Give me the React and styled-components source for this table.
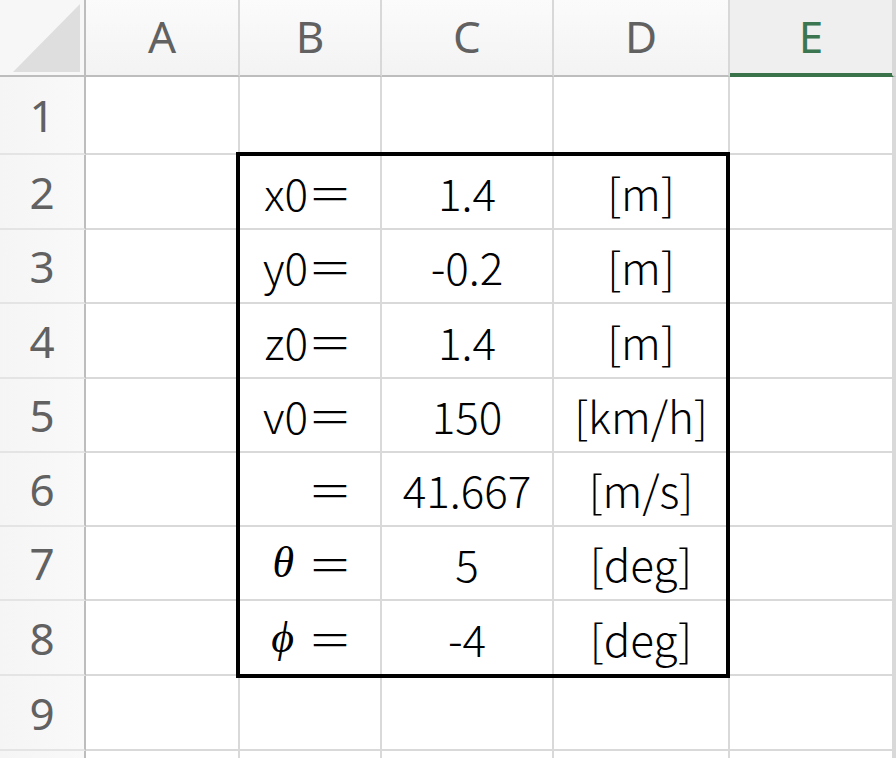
import React from 'react';
import styled, { createGlobalStyle, css } from 'styled-components';

const GlobalStyle = createGlobalStyle`
  html, body { margin: 0; padding: 0; background: #fff; overflow: hidden; }
  body { width: 896px; height: 758px; }
`;

const COL_WIDTHS = [86, 154, 142, 172, 176, 164];
const ROW_HEIGHTS = [77, 78, 75, 74, 75, 74, 74, 74, 75, 75, 40];

const Sheet = styled.div`
  display: grid;
  grid-template-columns: ${COL_WIDTHS.map((w) => `${w}px`).join(' ')} 1fr;
  grid-template-rows: ${ROW_HEIGHTS.map((h) => `${h}px`).join(' ')};
  width: 896px;
  height: 758px;
  overflow: hidden;
  background: #fff;
`;

const placed = css`
  grid-row: ${(p) => p.$row};
  grid-column: ${(p) => p.$col};
  box-sizing: border-box;
  min-width: 0;
  overflow: hidden;
`;

const Corner = styled.div`
  ${placed}
  background: #f7f7f7;
  border-right: 2px solid #bdbdbd;
  border-bottom: 2px solid #bdbdbd;
  padding: 4px 4px 3px 13px;
  display: flex;
`;

const CornerTriangle = styled.div`
  flex: 1;
  background: #dedede;
  clip-path: polygon(100% 0, 100% 100%, 0 100%);
`;

const ColHeader = styled.div`
  ${placed}
  display: flex;
  align-items: center;
  justify-content: center;
  background: ${(p) => (p.$active ? '#efefef' : 'linear-gradient(#fbfbfb, #f3f3f3)')};
  border-right: 2px solid #d8d8d8;
  border-bottom: 2px solid ${(p) => (p.$active ? '#3a7349' : '#bdbdbd')};
  box-shadow: ${(p) => (p.$active ? 'inset 0 -2px 0 #3a7349' : 'none')};
  color: ${(p) => (p.$active ? '#3b7650' : '#616161')};
  font-family: "Noto Sans", "Open Sans", sans-serif;
  font-size: 44px;
  line-height: 1;
  padding-bottom: 4px;
`;

const RowHeader = styled.div`
  ${placed}
  display: flex;
  align-items: center;
  justify-content: center;
  background: linear-gradient(90deg, #f5f5f5, #f9f9f9);
  border-right: 2px solid #bdbdbd;
  border-bottom: 2px solid #e4e4e4;
  color: #616161;
  font-family: "Noto Sans", "Open Sans", sans-serif;
  font-size: 44px;
  line-height: 1;
`;

const Cell = styled.div`
  ${placed}
  display: flex;
  align-items: center;
  justify-content: ${(p) => (p.$align === 'right' ? 'flex-end' : 'center')};
  padding-right: ${(p) => (p.$align === 'right' ? '28px' : '0')};
  border-right: 2px solid #d9d9d9;
  border-bottom: 2px solid #d9d9d9;
  color: #000;
  font-family: "Noto Sans CJK JP", "Noto Sans", sans-serif;
  font-weight: 300;
  font-size: 44px;
  line-height: 1;
  white-space: pre;
`;

const Sym = styled.span`
  font-family: "Liberation Serif", "DejaVu Serif", serif;
  font-style: italic;
  font-weight: 400;
  font-size: 44px;
  margin-right: 14px;
`;

const RangeBox = styled.div`
  grid-row: ${(p) => p.$row};
  grid-column: ${(p) => p.$col};
  margin: -3px 0 -2px -4px;
  border: 4px solid #000;
  pointer-events: none;
  z-index: 2;
`;

const COLUMNS = ['A', 'B', 'C', 'D', 'E'];

const DATA = [
  { label: 'x0＝', value: '1.4', unit: '[m]' },
  { label: 'y0＝', value: '-0.2', unit: '[m]' },
  { label: 'z0＝', value: '1.4', unit: '[m]' },
  { label: 'v0＝', value: '150', unit: '[km/h]' },
  { label: '＝', value: '41.667', unit: '[m/s]' },
  { sym: 'θ', label: '＝', value: '5', unit: '[deg]' },
  { sym: 'ϕ', label: '＝', value: '-4', unit: '[deg]' },
];

const VISIBLE_ROW_LABELS = 9;

export default function App() {
  const rowCount = ROW_HEIGHTS.length - 1; // rows 1..10
  const cells = [];

  cells.push(
    <Corner key="corner" $row={1} $col={1}>
      <CornerTriangle />
    </Corner>
  );
  COLUMNS.forEach((c, i) => {
    cells.push(
      <ColHeader key={`h-${c}`} $row={1} $col={i + 2} $active={c === 'E'}>
        {c}
      </ColHeader>
    );
  });
  cells.push(<ColHeader key="h-rest" $row={1} $col={7} />);

  for (let r = 1; r <= rowCount; r++) {
    const gridRow = r + 1;
    cells.push(
      <RowHeader key={`r-${r}`} $row={gridRow} $col={1}>
        {r <= VISIBLE_ROW_LABELS ? r : null}
      </RowHeader>
    );
    const d = r >= 2 && r <= 8 ? DATA[r - 2] : null;
    for (let c = 2; c <= 7; c++) {
      let content = null;
      let align = 'center';
      if (d && c === 3) {
        align = 'right';
        content = (
          <>
            {d.sym && <Sym>{d.sym}</Sym>}
            {d.label}
          </>
        );
      } else if (d && c === 4) {
        content = d.value;
      } else if (d && c === 5) {
        content = d.unit;
      }
      cells.push(
        <Cell key={`c-${r}-${c}`} $row={gridRow} $col={c} $align={align}>
          {content}
        </Cell>
      );
    }
  }

  return (
    <>
      <GlobalStyle />
      <Sheet>
        {cells}
        <RangeBox $row="3 / 10" $col="3 / 6" />
      </Sheet>
    </>
  );
}
